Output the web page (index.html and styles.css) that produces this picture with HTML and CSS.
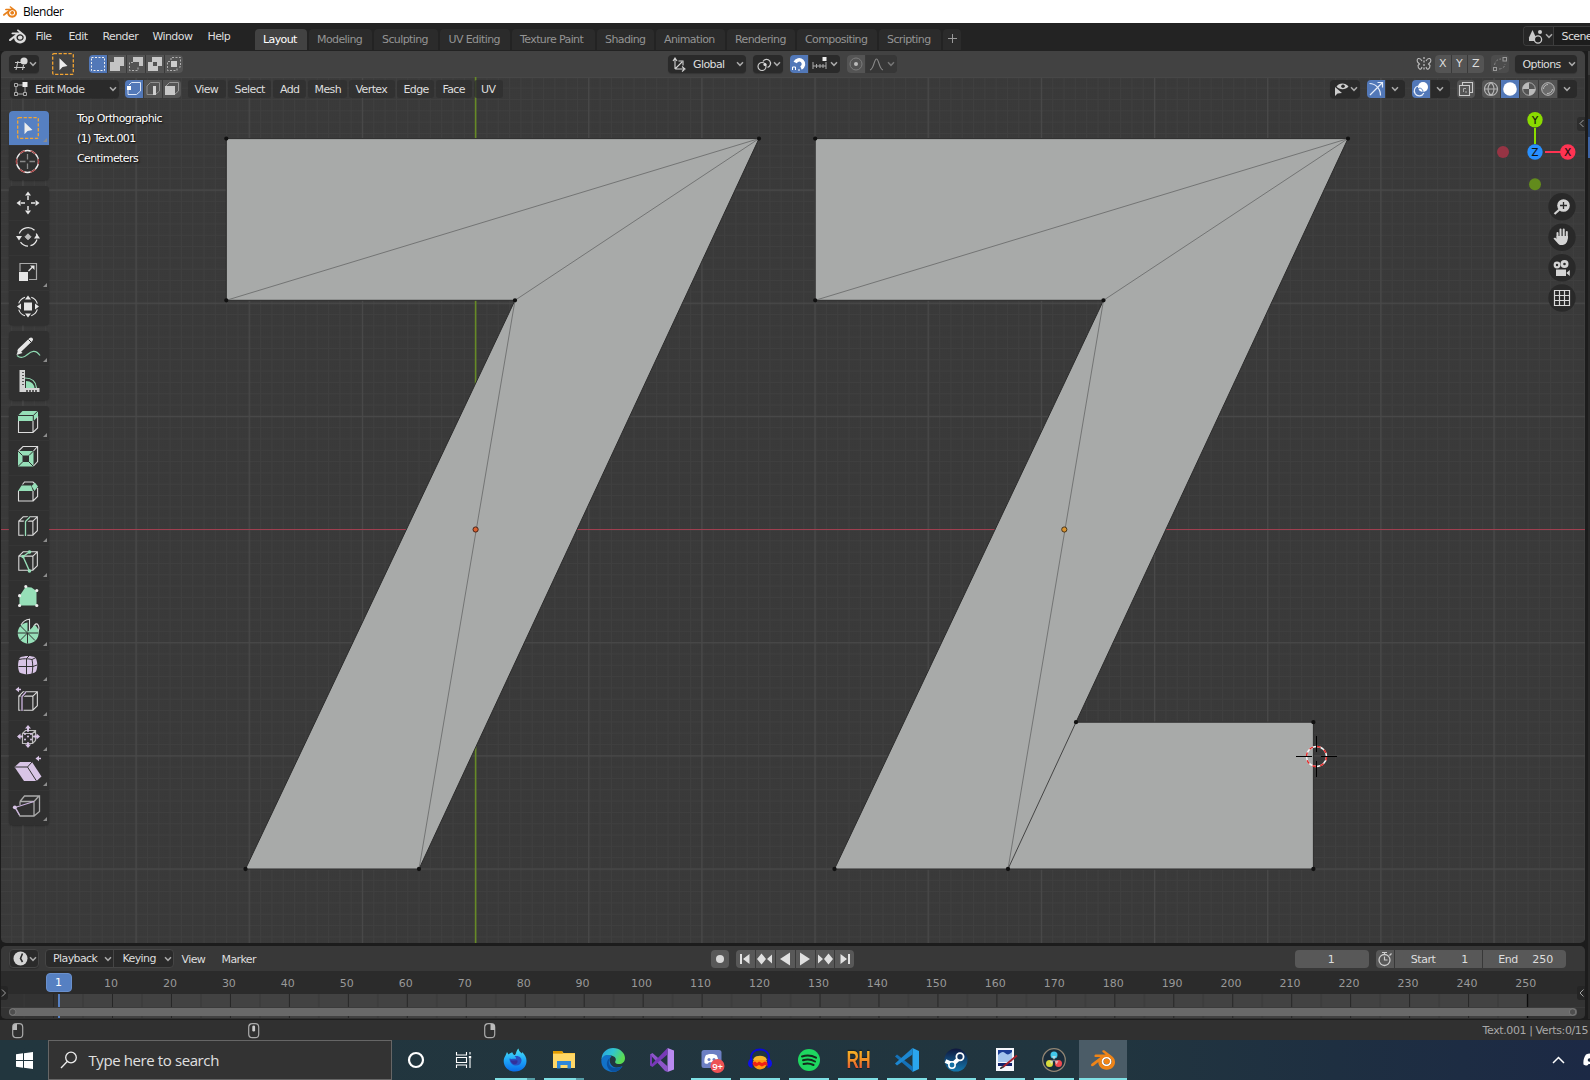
FILE: index.html
```html
<!DOCTYPE html>
<html lang="en">
<head>
<meta charset="utf-8">
<title>Blender</title>
<link rel="stylesheet" href="styles.css">
</head>
<body>
<svg class="defs" aria-hidden="true">
  <defs>
    <symbol id="blender" viewBox="0 0 24 24"><path d="M12.51 13.214c.046-.8.438-1.506 1.03-2.006a3.424 3.424 0 0 1 2.212-.79c.85 0 1.631.3 2.211.79.592.5.983 1.206 1.028 2.005.045.823-.285 1.586-.865 2.153a3.389 3.389 0 0 1-2.374.938 3.393 3.393 0 0 1-2.376-.938c-.58-.567-.91-1.33-.865-2.152M7.35 14.831c.006.314.106.922.256 1.398a7.372 7.372 0 0 0 1.593 2.757 8.227 8.227 0 0 0 2.787 2.001 8.947 8.947 0 0 0 3.66.76 8.964 8.964 0 0 0 3.657-.772 8.285 8.285 0 0 0 2.785-2.01 7.428 7.428 0 0 0 1.592-2.762 6.964 6.964 0 0 0 .25-3.074 7.123 7.123 0 0 0-1.016-2.779 7.764 7.764 0 0 0-1.852-2.043h.002L13.566 2.55l-.02-.015c-.492-.378-1.319-.376-1.86.002-.547.382-.609 1.015-.123 1.415l-.001.001 3.126 2.543-9.53.01h-.013c-.788.001-1.545.518-1.695 1.172-.154.665.38 1.217 1.2 1.22V8.9l4.83-.01-8.62 6.617-.034.025c-.813.622-1.075 1.658-.563 2.315.52.667 1.625.668 2.447.004L7.414 14s-.069.52-.063.831zm12.09 1.741c-.97.988-2.326 1.548-3.795 1.55-1.47.004-2.827-.552-3.797-1.538a4.51 4.51 0 0 1-1.036-1.622 4.282 4.282 0 0 1 .282-3.519 4.702 4.702 0 0 1 1.153-1.371c.942-.768 2.141-1.183 3.396-1.185 1.256-.002 2.455.41 3.398 1.175.48.391.87.854 1.152 1.367a4.28 4.28 0 0 1 .522 1.706 4.236 4.236 0 0 1-.239 1.811 4.54 4.54 0 0 1-1.035 1.626"/></symbol>
    <symbol id="chev" viewBox="0 0 8 6"><path d="M1 1.2 4 4.3 7 1.2" fill="none" stroke="#a8a8a8" stroke-width="1.5"/></symbol>
    <symbol id="cube" viewBox="0 0 40 35"><path d="M9.5 12.5h14.5v14.5H9.5zL14 8h14.6v14.3L24 27M24 12.5 28.6 8" fill="none" stroke="#dcdcdc" stroke-width="1.1"/></symbol>
    <symbol id="more" viewBox="0 0 5 5"><path d="M5 0v5H0z" fill="#8c8c8c"/></symbol>
    <symbol id="cursor-tool" viewBox="0 0 22 22"><rect x=".7" y=".7" width="20.6" height="20.6" rx="1" fill="none" stroke="#f3a432" stroke-width="1.3" stroke-dasharray="3.3 1.6"/><path d="M7.5 5.2v12l3-3.1 5-1z" fill="#ececec"/></symbol>
  </defs>
</svg>

<div class="titlebar"><svg class="title-logo"><use href="#blender"/></svg><span>Blender</span></div>

<header class="topbar">
  <svg class="app-logo"><use href="#blender"/></svg>
  <nav class="app-menu"><span>File</span><span>Edit</span><span>Render</span><span>Window</span><span>Help</span></nav>
  <nav class="tabs">
    <span class="active">Layout</span><span>Modeling</span><span>Sculpting</span><span>UV Editing</span><span>Texture Paint</span><span>Shading</span><span>Animation</span><span>Rendering</span><span>Compositing</span><span>Scripting</span><span class="plus"><svg width="9" height="9"><path d="M4.5 0v9M0 4.5h9" stroke="#999"/></svg></span>
  </nav>
  <div class="scene">
    <span class="scene-icon"><svg width="15" height="15"><path d="M4.5 1 8 8.5V12H1V8.500z" fill="#ccc"/><circle cx="12" cy="3" r="2" fill="#ccc"/><circle cx="10" cy="10.500" r="3.600" fill="#232323" stroke="#ccc" stroke-width="1.3"/></svg><svg class="chev"><use href="#chev"/></svg></span>
    <span class="scene-name">Scene</span>
  </div>
</header>

<main class="workspace">
  <section class="area editor">
    <div class="tool-header">
      <span class="drop editor-type"><svg width="15" height="15"><path d="M2 5.500h6M1 10.500h11M5 4 3 13M10.500 8l-1 5" stroke="#c8c8c8" stroke-width="1.1"/><circle cx="11" cy="4" r="3.600" fill="#d8d8d8"/></svg><svg class="chev"><use href="#chev"/></svg></span>
      <svg class="active-tool" width="22" height="22"><use href="#cursor-tool"/></svg>
      <div class="group select-modes">
        <span class="on"><svg><rect x="2.500" y="2.500" width="13" height="13" fill="none" stroke="#eee" stroke-dasharray="2 1.500"/></svg></span>
        <span><svg><path d="M6 2h10v9h-4v5H2V7h4z" fill="#c4c4c4"/></svg></span>
        <span><svg><path d="M6 2h10v9h-4V7H6z" fill="#c4c4c4"/><path d="M6 7.500H2.500v8H11V12" fill="none" stroke="#b0b0b0" stroke-dasharray="2 1.500"/></svg></span>
        <span><svg><path d="M6 2h10v9h-4v5H2V7h4zM7 7v4h4V7z" fill="#c8c8c8" fill-rule="evenodd"/></svg></span>
        <span><svg><rect x="6" y="6" width="6" height="6" fill="#ccc"/><path d="M6 5V2.500h9.500V12H13M5 6.500H2.500v9H12V13" fill="none" stroke="#b0b0b0" stroke-dasharray="2 1.500"/></svg></span>
      </div>
      <span class="drop orientation"><svg width="15" height="15"><path d="M3 12V2M1 4l2-3 2 3M3 12h9M10 9.500l3 2.500-3 2.500M3 12l7-7M6.500 4H11v4.500" fill="none" stroke="#d4d4d4" stroke-width="1.100"/></svg><b>Global</b><svg class="chev"><use href="#chev"/></svg></span>
      <span class="drop pivot"><svg width="15" height="15"><circle cx="5" cy="9.500" r="4" fill="none" stroke="#ccc" stroke-width="1.200"/><path d="M6 4.500a4 4 0 1 1 4.500 5.800" fill="none" stroke="#ccc" stroke-width="1.200"/><circle cx="8" cy="7.500" r="1.600" fill="#ddd"/></svg><svg class="chev"><use href="#chev"/></svg></span>
      <div class="group snap"><span class="on"><svg><path d="M5.200 7.500A4.300 4.300 0 1 1 11 13" fill="none" stroke="#fff" stroke-width="3.600"/><path d="M2.500 15v-3h3v3M8 15h2" fill="none" stroke="#fff"/></svg></span>
      <span class="snap-type"><svg class="snap-svg"><path d="M1 6v7M14 6v7M1 10h13M4.500 8v4M8 8v4M11 8v4" stroke="#aaa"/><rect x="10.500" y="1" width="4" height="4" fill="#eee"/></svg><svg class="chev"><use href="#chev"/></svg></span></div>
      <div class="group prop"><span><svg><circle cx="9" cy="9" r="6" fill="none" stroke="#7c7c7c"/><circle cx="9" cy="9" r="2" fill="#bdbdbd"/></svg></span><span class="prop-type"><svg class="snap-svg"><path d="M1 14C5 13 5 3 7.500 3S10 13 14 14" fill="none" stroke="#888" stroke-width="1.200"/></svg><svg class="chev dim"><use href="#chev"/></svg></span></div>
      <svg class="mirror" width="16" height="16"><path d="M8 1v14" stroke="#ddd" stroke-dasharray="2 1.500"/><path d="M6 5C4 1 0 2 1.500 6L3.500 8 2 9.500C2 13 5 15 6 11M10 5c2-4 6-3 4.500 1L12.500 8l1.500 1.500C14 13 11 15 10 11" fill="none" stroke="#bbb" stroke-width="1.100"/></svg>
      <div class="group axes"><span>X</span><span>Y</span><span>Z</span></div>
      <div class="group automerge"><span><svg><rect x="2.500" y="12.500" width="3" height="3" fill="none" stroke="#999"/><rect x="12" y="2.500" width="3.500" height="3.500" fill="none" stroke="#999"/><path d="M3.500 10C4 6 7 4 10 4M8 14c3 0 6-2 6-5" fill="none" stroke="#828282" stroke-dasharray="2.500 1.500"/></svg></span></div>
      <span class="drop options"><b>Options</b><svg class="chev"><use href="#chev"/></svg></span>
    </div>

    <div class="viewport">
      <svg class="scene3d" width="1584" height="866" viewBox="1 77 1584 866">
        <defs>
          <pattern id="fine" x="475.600" y="529.500" width="2.263" height="2.263" patternUnits="userSpaceOnUse"><path d="M0 0h2.263M0 0v2.263" stroke="#3c3c3c" stroke-width="1"/></pattern>
          <pattern id="minor" x="475.100" y="529" width="11.316" height="11.316" patternUnits="userSpaceOnUse"><path d="M0 .500h11.316M.500 0v11.316" stroke="#404040" stroke-width="1"/></pattern>
          <pattern id="major" x="475" y="529" width="113.160" height="113.160" patternUnits="userSpaceOnUse"><path d="M0 .600h113.160M.600 0v113.160" stroke="#494949" stroke-width="1.200"/></pattern>
        </defs>
        <rect x="1" y="77" width="1584" height="866" fill="#393939"/>
        <rect x="1" y="77" width="1584" height="866" fill="url(#fine)" opacity=".5"/>
        <rect x="1" y="77" width="1584" height="866" fill="url(#minor)" opacity=".9"/>
        <rect x="1" y="77" width="1584" height="866" fill="url(#major)"/>
        <path d="M1 77.500h1584" stroke="#474747"/>
        <path d="M1 529.500h1584" stroke="#a03f50" stroke-width="1.200"/>
        <path d="M475.600 77v866" stroke="#668a26" stroke-width="1.600"/>
        <g fill="#a8aaa9" stroke="#2c2c2c" stroke-width="1">
          <path d="M226.300 138.600H759L419 869H245.500L515 300.300H226.300z"/>
          <path d="M815.200 138.600H1348L1076 722.200H1313.400V869H834.500L1103.500 300.300H815.200z"/>
        </g>
        <g fill="none" stroke="#6d6e6e" stroke-width=".9"><path d="M226.300 300.300 759 138.600 515 300.300 419 869"/><path d="M815.200 300.300 1348 138.600 1103.500 300.300 1008 869"/></g>
        <path d="M1076 722.200 1008 869" stroke="#444" stroke-width="1"/>
        <path d="M226.300 138.600h0M759 138.600h0M226.300 300.300h0M515 300.300h0M245.500 869h0M419 869h0M815.200 138.600h0M1348 138.600h0M815.200 300.300h0M1103.500 300.300h0M834.500 869h0M1008 869h0M1076 722.200h0M1313.400 722.200h0M1313.400 869h0" stroke="#111" stroke-width="4.300" stroke-linecap="round"/>
        <circle cx="475.600" cy="529.500" r="2.600" fill="#d9602f" stroke="#4a2418"/><circle cx="1064.300" cy="529.500" r="2.600" fill="#d9932f" stroke="#4a3518"/>
        <circle cx="1316.500" cy="756.500" r="10" fill="none" stroke="#f4f4f4" stroke-width="1.500"/><circle cx="1316.500" cy="756.500" r="10" fill="none" stroke="#e22a2a" stroke-width="1.500" stroke-dasharray="3.927"/>
        <path d="M1296 756.500h16M1321 756.500h16M1316.500 736v16M1316.500 761v16" stroke="#000"/>
        <g stroke-width="2"><path d="M1535 128v16" stroke="#8bdc00"/><path d="M1545 152h16" stroke="#ff3352"/></g>
        <circle cx="1503" cy="152" r="6" fill="#963444"/><circle cx="1535" cy="184.300" r="6" fill="#628b1c"/>
        <circle cx="1535" cy="119.700" r="7.700" fill="#8bdc00"/><circle cx="1535" cy="152" r="7.700" fill="#2890ff"/><circle cx="1567.800" cy="152" r="7.700" fill="#ff3352"/>
        <g class="axis-label"><text x="1535" y="123.500">Y</text><text x="1535" y="156">Z</text><text x="1567.800" y="156">X</text></g>
        <path d="M1585 117h-5a3 3 0 0 0-3 3v8a3 3 0 0 0 3 3h5z" fill="#2d2d2d"/><path d="M1583.500 120l-3.500 3.500 3.500 3.500" fill="none" stroke="#a0a0a0"/>
        <g fill="#292929"><circle cx="1562" cy="206.700" r="13.700"/><circle cx="1562" cy="237.200" r="13.700"/><circle cx="1562" cy="267.700" r="13.700"/><circle cx="1562" cy="298" r="13.700"/></g>
        <circle cx="1563.500" cy="205.500" r="6.300" fill="#d4d4d4"/><path d="M1559.500 209.500l-5 4.500" stroke="#d4d4d4" stroke-width="2.200"/><path d="M1563.500 202v7M1560 205.500h7" stroke="#292929" stroke-width="1.300"/>
        <path d="M1557.500 239v-6M1560.500 237v-7.500M1563.700 237v-7.500M1566.800 238v-6" stroke="#d4d4d4" stroke-width="2" stroke-linecap="round"/><path d="M1556.500 236h11.400c0 5-1 8-5 9h-3c-2-1-4-4-6.400-6.500 1-1.500 2.500-.5 3.500.5z" fill="#d4d4d4"/>
        <g fill="#d4d4d4"><circle cx="1557" cy="265" r="3.400"/><circle cx="1564.500" cy="264" r="4"/><path d="M1556 269.500h10v6.500h-10zM1569.800 270v6l-3.500-3z"/></g><circle cx="1557" cy="265" r="1.200" fill="#292929"/><circle cx="1564.500" cy="264" r="1.300" fill="#292929"/>
        <path d="M1554.500 290.500h15v15h-15zM1559.500 290.500v15M1564.500 290.500v15M1554.500 295.500h15M1554.500 300.500h15" fill="none" stroke="#d8d8d8" stroke-width="1.200"/>
      </svg>

      <div class="overlay">
        <div class="view-header">
          <span class="drop mode"><svg width="15" height="15"><path d="M4 3h6M3 4v6M4 12h6M12 5v5" stroke="#aaa"/><path d="M1.500 1.500h3v3h-3zM1.500 10.500h3v3h-3zM10.500 10.500h3v3h-3z" fill="none" stroke="#aaa"/><path d="M9.500 0h5v5h-5z" fill="#eee"/></svg><b>Edit Mode</b><svg class="chev"><use href="#chev"/></svg></span>
          <div class="group elem-modes">
            <span class="on"><svg><path d="M3 6V14.500H11.500L15.500 11V2.500H6.500L4 5" fill="none" stroke="#dbe4f5"/><rect x="2" y="6" width="4" height="4" fill="#fff"/></svg></span>
            <span><svg><path d="M3 6V14.500H11.500L15.500 11V2.500H6.500L3 6" fill="none" stroke="#8f8f8f"/><path d="M9 6h3v9H9z" fill="#d0d0d0"/></svg></span>
            <span><svg><path d="M3 6V14.500H11.500L15.500 11V2.500H6.500L3 6" fill="none" stroke="#999"/><path d="M2 6h10v9H2z" fill="#c8c8c8"/></svg></span>
          </div>
          <nav class="view-menu"><span>View</span><span>Select</span><span>Add</span><span>Mesh</span><span>Vertex</span><span>Edge</span><span>Face</span><span>UV</span></nav>
          <span class="drop visibility"><svg width="15" height="15"><path d="M1 5v9l2.500-2.500L8 11z" fill="#ccc"/><path d="M2.500 4.500C5 .5 11.500.5 14.500 4.500 11.500 8 5.500 8 2.500 4.500z" fill="#ccc"/><circle cx="9" cy="4.300" r="1.800" fill="#2a2a2a"/></svg><svg class="chev"><use href="#chev"/></svg></span>
          <div class="group pair gizmo"><span class="on"><svg><path d="M2.500 3.500c6 0 11 5 11 12M3 15 15 3M10.500 2.500h5v5" fill="none" stroke="#e6edfa" stroke-width="1.200"/></svg></span><span class="dark"><svg class="chev"><use href="#chev"/></svg></span></div>
          <div class="group pair"><span class="on"><svg><circle cx="11" cy="7" r="5" fill="#fff"/><path d="M6.500 6A5 5 0 1 0 11.800 13" fill="none" stroke="#e6edfa" stroke-width="1.200"/><path d="M6 9c2-2 5 0 5 3" fill="none" stroke="#5680c2"/></svg></span><span class="dark"><svg class="chev"><use href="#chev"/></svg></span></div>
          <div class="group xray"><span><svg><path d="M2.500 5.500h10v10h-10zM5.500 5V2.500h10v10H13" fill="none" stroke="#ccc" stroke-width="1.100"/><path d="M6.500 12V8.500H9M10 12H8" fill="none" stroke="#aaa"/></svg></span></div>
          <div class="group shading">
            <span><svg><path d="M9 2.500a6.500 6.500 0 1 0 .01 0M2.500 9h13M9 2.500C5 6 5 12 9 15.500M9 2.500C13 6 13 12 9 15.500" fill="none" stroke="#b4b4b4" stroke-width="1.100"/></svg></span>
            <span class="on"><svg><circle cx="9" cy="9" r="6.800" fill="#fff"/></svg></span>
            <span><svg><circle cx="9" cy="9" r="6.300" fill="none" stroke="#aaa"/><path d="M9 2.500V9h6.500A6.500 6.500 0 0 1 9 15.500V9H2.500A6.500 6.500 0 0 1 9 2.500z" fill="#bbb"/></svg></span>
            <span><svg><circle cx="9" cy="9" r="6.300" fill="#6a6a6a" stroke="#bbb"/><path d="M4.500 9A4.500 4.500 0 0 1 9 4.500M8 13.500A5 5 0 0 0 13.500 9" fill="none" stroke="#bbb"/></svg></span>
            <span class="dark"><svg class="chev"><use href="#chev"/></svg></span>
          </div>
        </div>

        <div class="view-body">
          <div class="toolbar">
            <div class="tools">
              <span class="tool on"><svg><use href="#cursor-tool" x="8" y="6" width="22" height="22"/><use href="#more" x="34" y="27" width="4" height="4"/></svg></span>
              <span class="tool"><svg><circle cx="18.500" cy="17.500" r="11" fill="none" stroke="#eee" stroke-width="1.300"/><circle cx="18.500" cy="17.500" r="11" fill="none" stroke="#a84848" stroke-width="1.400" stroke-dasharray="5.760" stroke-dashoffset="3"/><path d="M11 17.500h5.500M20.500 17.500H26M18.500 10v5.500M18.500 19.500V25" stroke="#888" stroke-width="1.300"/></svg></span>
            </div>
            <div class="tools">
              <span class="tool"><svg><path d="M19 5.500l3 4h-6zM19 28.500l3-4h-6zM7.500 17l4-3v6zM30.500 17l-4-3v6z" fill="#e6e6e6"/><path d="M19 10v4M19 20v4M12 17h4M22 17h4" stroke="#e6e6e6" stroke-width="1.500"/></svg></span>
              <span class="tool"><svg><path d="M10.300 14.500A9.500 9.500 0 0 1 25.500 11.300M11.500 23.200A9.500 9.500 0 0 0 19 27.200M21.500 26.700A9.500 9.500 0 0 0 28 20.500M28 16.500a9.500 9.500 0 0 0-.800-2" fill="none" stroke="#e6e6e6" stroke-width="1.200"/><path d="M7 17h6l-3 4.500zM25 19.500h6l-3-4.500z" fill="#e6e6e6"/><path d="M19 14.800l3 3-3 3-3-3z" fill="#bbb" stroke="#bbb" stroke-linejoin="round"/></svg></span>
              <span class="tool"><svg><path d="M11 17.500V9.500h16.500v16H20" fill="none" stroke="#aaa" stroke-width="1.200"/><path d="M10 18h9v9h-9z" fill="#e6e6e6"/><path d="M19.500 17l4-4" stroke="#e6e6e6" stroke-width="1.200"/><path d="M25.500 11.500v4.500L21 11.500z" fill="#e6e6e6"/><use href="#more" x="34" y="29" width="4" height="4"/></svg></span>
              <span class="tool"><svg><circle cx="19" cy="17.500" r="9.800" fill="none" stroke="#e6e6e6" stroke-width="1.100" stroke-dasharray="9 6.400" stroke-dashoffset="-3"/><path d="M15 13.500h8v8h-8z" fill="#e6e6e6"/><path d="M19 6.500l3 4h-6zM19 28.500l3-4h-6zM8 17.500l4-3v6zM30 17.500l-4-3v6z" fill="#e6e6e6"/></svg></span>
            </div>
            <div class="tools">
              <span class="tool"><svg><path d="M10.500 19.500 22 8.500" stroke="#e6e6e6" stroke-width="4" stroke-linecap="round"/><path d="M7.500 24l2-6 4 4z" fill="#e6e6e6"/><path d="M19.500 8.500l2.500 2.500" stroke="#2f2f2f"/><path d="M8 24.500c4 3.500 7 2 10.500-1s8-5.500 12.500 1" fill="none" stroke="#8ed8b0" stroke-width="1.300"/><use href="#more" x="34" y="27" width="4" height="4"/></svg></span>
              <span class="tool"><svg><path d="M10.500 6h5.500v18h14.500v4H10.500z" fill="#d4d4d4"/><path d="M14 8v1M14 11v1M14 14v1M14 17v1M14 20v1M18 26v2M21 26v2M24 26v2M27 26v2" stroke="#303030" stroke-width="1.500"/><path d="M17 24v-7c5 0 8 3 8.500 7z" fill="#96dfb8"/><path d="M16 14c7 0 11 4 11.500 10" fill="none" stroke="#96dfb8" stroke-width="1.200"/></svg></span>
            </div>
            <div class="tools">
              <span class="tool"><svg><path d="M9.500 15v11.500H24L28.600 22V10M24 15v11.500" fill="none" stroke="#dcdcdc" stroke-width="1.100"/><path d="M9 9.500 13.500 5h15.500v5.500L24.500 15H9z" fill="#96dfb8"/><path d="M9 9.500h15.300L28.800 5M24.300 9.500V15" fill="none" stroke="#303030"/><use href="#more" x="34" y="27" width="4" height="4"/></svg></span>
              <span class="tool"><svg><path d="M9 12h15.500v15.500H9z" fill="#96dfb8"/><path d="M9 12l4.500 4.500M24.500 12 20 16.500M9 27.500l4.500-4.500M24.500 27.500 20 23" stroke="#303030"/><path d="M13.500 16.500h6.500V23h-6.500z" fill="#303030"/><path d="M9.500 12 14 7.500h14.600v15L24.500 27M24.500 12l4-4.500" fill="none" stroke="#dcdcdc" stroke-width="1.100"/></svg></span>
              <span class="tool"><svg><path d="M9.500 17v10H24V17M24 27l4.600-4.500V14M13.500 10.500 15.500 8H24l2 2" fill="none" stroke="#dcdcdc" stroke-width="1.100"/><path d="M9 17l3.500-5.500h9.500L24 17z" fill="#96dfb8"/><path d="M22.500 12 26 8.800l3 3.700L25.500 17z" fill="#96dfb8"/></svg></span>
              <span class="tool"><svg><use href="#cube"/><path d="M16.500 27V12.500L21 8" fill="none" stroke="#303030" stroke-width="3.500"/><path d="M16.500 27V12.500L21 8" fill="none" stroke="#96dfb8" stroke-width="1.300"/><use href="#more" x="34" y="29" width="4" height="4"/></svg></span>
              <span class="tool"><svg><use href="#cube"/><path d="M20.500 8 14 12.500 20.500 27" fill="none" stroke="#96dfb8" stroke-width="1.400"/><path d="M20.500 8h0M14 12.500h0M20.500 27h0" stroke="#96dfb8" stroke-width="3.600" stroke-linecap="round"/><use href="#more" x="34" y="29" width="4" height="4"/></svg></span>
              <span class="tool"><svg><path d="M10.500 17 16.500 8l6 .500 5 3.500V26.500h-17z" fill="#96dfb8"/><path d="M16.800 7.500h0M27.800 11.500h0M10.600 16.700h0M10.600 26.500h0M27.800 26.500h0" stroke="#eee" stroke-width="3.200" stroke-linecap="round"/></svg></span>
              <span class="tool"><svg><path d="M12 11C14 7.500 17 5.500 20.500 5.200V17M24 14c2-5 5-6 6 0-.5 5-2 6-3 7" fill="none" stroke="#ddd" stroke-width="1.100"/><path d="M18.500 18V8.500A10.500 10.500 0 1 0 26 11z" fill="#96dfb8"/><path d="M18.500 19 10.500 11M18.500 19H8M18.500 19l-7.500 7.500M18.500 19v10.500M18.500 19l7.500 7.500M18.500 19H29" stroke="#303030"/><use href="#more" x="34" y="28" width="4" height="4"/></svg></span>
              <span class="tool"><svg><path d="M11 8.500c4-2 12-2 15.500 0 2 4 2.500 9 .5 14-4 3.500-12 3.500-16.500 1C8.500 19 8.500 13 11 8.500z" fill="#d8c4e6"/><path d="M10 10.500c4-1 9-1 13 0l4-2M9.500 17.500H24l4-1.500M17.500 9.500v16M23 10.500c1 5 1 9 0 14.500M17.500 9.500 20 7" fill="none" stroke="#303030"/><use href="#more" x="34" y="28" width="4" height="4"/></svg></span>
              <span class="tool"><svg><use href="#cube"/><path d="M13 27V12.500L17 8" fill="none" stroke="#303030" stroke-width="3"/><path d="M13 27V12.500L17 8" fill="none" stroke="#cdb4e0" stroke-width="1.300"/><path d="M6.500 5.500 10 2.800V8.200z" fill="#d8c4e6"/><path d="M9 5.500h3" stroke="#d8c4e6" stroke-width="1.500"/><use href="#more" x="34" y="28" width="4" height="4"/></svg></span>
              <span class="tool"><svg><path d="M13.500 14.500h10v10h-10zL16.500 11.500h10v10l-3 3M23.500 14.500l3-3" fill="none" stroke="#bbb" stroke-width="1.200"/><path d="M19 6l3 3.500h-6zM19 29l3-3.500h-6zM8 17.500l3.500-3v6zM31 17.500l-3.500-3v6z" fill="#d8c4e6"/><path d="M16 15h0M22 15h0M16 20.500h0M22 20.500h0M10 17.500h3M25 17.500h3M19 9v3M19 24v3M19 17.500h0" stroke="#d8c4e6" stroke-width="2" stroke-linecap="round"/><use href="#more" x="34" y="28" width="4" height="4"/></svg></span>
              <span class="tool"><svg><path d="M5.500 13 11 8h12l9.500 14.500-5 4.500H15z" fill="#d8c4e6"/><path d="M6 13h12.500L23 8M18.500 13l9 14" fill="none" stroke="#303030"/><path d="M26.500 4.500 30 1.800v5.400z" fill="#d8c4e6"/><path d="M29 4.500h3" stroke="#d8c4e6" stroke-width="1.500"/><use href="#more" x="34" y="28" width="4" height="4"/></svg></span>
              <span class="tool"><svg><path d="M11 12.500 15.500 7h15v15.500L25 27H11L7 19.500M11 12.500h14L30 7M25 12.500V27M11 12.500V16" fill="none" stroke="#aaa" stroke-width="1.300"/><path d="M10.500 26 6 18.500 25 12.500" fill="none" stroke="#cdb4e0" stroke-width="1.200"/><circle cx="5.800" cy="18.300" r="1.900" fill="#d8c4e6"/><use href="#more" x="34" y="28" width="4" height="4"/></svg></span>
            </div>
          </div>
          <div class="view-info"><p>Top Orthographic</p><p>(1) Text.001</p><p>Centimeters</p></div>
        </div>
      </div>
    </div>
  </section>

  <section class="area timeline">
    <div class="tl-header">
      <span class="drop clock"><svg width="15" height="15"><circle cx="7.500" cy="7.500" r="7" fill="#d4d4d4"/><path d="M9.500 2.500 7.500 7.500l2 3.500" fill="none" stroke="#2a2a2a" stroke-width="1.600"/></svg><svg class="chev"><use href="#chev"/></svg></span>
      <div class="tl-drops"><span><b>Playback</b><svg class="chev"><use href="#chev"/></svg></span><span><b>Keying</b><svg class="chev"><use href="#chev"/></svg></span></div>
      <span class="tl-view">View</span><span class="tl-marker">Marker</span>
      <div class="group rec"><span><svg><circle cx="9" cy="9" r="4" fill="#d8d8d8"/></svg></span></div>
      <div class="group transport">
        <span><svg><path d="M4 4h2v10H4zM13.500 4v10L7 9z" fill="#e0e0e0"/></svg></span>
        <span><svg><path d="M5.500 3.500 10 9l-4.500 5.500L1 9zM16 4.500v9L11 9z" fill="#e0e0e0"/></svg></span>
        <span><svg><path d="M14 2.500v13L4 9z" fill="#e0e0e0"/></svg></span>
        <span><svg><path d="M4 2.500v13L14 9z" fill="#e0e0e0"/></svg></span>
        <span><svg><path d="M12.500 3.500 17 9l-4.500 5.500L8 9zM2 4.500v9L7 9z" fill="#e0e0e0"/></svg></span>
        <span><svg><path d="M12 4h2v10h-2zM4.500 4v10L11 9z" fill="#e0e0e0"/></svg></span>
      </div>
      <span class="field current">1</span>
      <div class="range"><span class="stopwatch"><svg width="18" height="18"><circle cx="8.500" cy="10" r="5.500" fill="none" stroke="#ccc" stroke-width="1.300"/><path d="M6 2.500h5M8.500 2.500v2M13.500 5.500l2-2M8.500 6.500V10h3" fill="none" stroke="#ccc" stroke-width="1.200"/></svg></span><span class="start"><b>Start</b><i>1</i></span><span class="end"><b>End</b><i>250</i></span></div>
    </div>
    <div class="ruler">
      <span class="frame">1</span>
      <div class="numbers"><span>10</span><span>20</span><span>30</span><span>40</span><span>50</span><span>60</span><span>70</span><span>80</span><span>90</span><span>100</span><span>110</span><span>120</span><span>130</span><span>140</span><span>150</span><span>160</span><span>170</span><span>180</span><span>190</span><span>200</span><span>210</span><span>220</span><span>230</span><span>240</span><span>250</span></div>
    </div>
    <div class="tracks">
      <svg width="1584" height="24" viewBox="1 994 1584 24">
        <defs><pattern id="ticks" x="112" y="994" width="58.960" height="24" patternUnits="userSpaceOnUse"><path d="M.500 0v24" stroke="#262626"/><path d="M30 0v24" stroke="#383838"/></pattern></defs>
        <rect x="1" y="994" width="1584" height="24" fill="#333"/><rect x="59" y="994" width="1468.500" height="24" fill="#424242"/>
        <rect x="20" y="994" width="1520" height="24" fill="url(#ticks)"/><path d="M1527.500 994v24" stroke="#0c0c0c" stroke-width="1.300"/>
        <path d="M59 992v26" stroke="#5680c2" stroke-width="2"/>
        <rect x="1" y="1007" width="1584" height="1" fill="#3b3b3b"/><rect x="9" y="1008" width="1568" height="8" rx="4" fill="#696969"/>
        <circle cx="12.700" cy="1012" r="3.200" fill="#4e4e4e" stroke="#858585" stroke-width=".7"/><circle cx="1572.600" cy="1012" r="3.200" fill="#4e4e4e" stroke="#858585" stroke-width=".7"/>
      </svg>
    </div>
    <svg class="side left" width="7" height="14"><path d="M0 0h4a3 3 0 0 1 3 3v8a3 3 0 0 1-3 3H0z" fill="#252525"/><path d="M1 3.500 4.500 7 1 10.500" fill="none" stroke="#a0a0a0"/></svg>
    <svg class="side right" width="8" height="14"><path d="M8 0H3a3 3 0 0 0-3 3v8a3 3 0 0 0 3 3h5z" fill="#252525"/><path d="M6.500 3.500 3 7l3.500 3.500" fill="none" stroke="#a0a0a0"/></svg>
  </section>
  <div class="next-area"></div>
</main>

<footer class="status">
  <svg width="12" height="16"><rect x=".700" y=".700" width="10" height="14" rx="3.500" fill="none" stroke="#aaa" stroke-width="1.200"/><path d="M1 7V3.500C1 2 2 1 3.500 1H5v6z" fill="#bbb"/></svg>
  <svg width="12" height="16"><rect x=".700" y=".700" width="10" height="14" rx="3.500" fill="none" stroke="#aaa" stroke-width="1.200"/><rect x="4.300" y="2.500" width="2.800" height="6" rx="1.300" fill="#ccc"/></svg>
  <svg width="12" height="16"><rect x=".700" y=".700" width="10" height="14" rx="3.500" fill="none" stroke="#aaa" stroke-width="1.200"/><path d="M11 7V3.500C11 2 10 1 8.500 1H6.500v6z" fill="#bbb"/></svg>
  <span>Text.001 | Verts:0/15</span>
</footer>

<footer class="taskbar">
  <span class="start-btn"><svg width="17" height="17"><path d="M0 2.300 7 1.300V8H0zM8 1.200 17 0v8H8zM0 9h7v6.700l-7-1zM8 9h9v8l-9-1.200z" fill="#fff"/></svg></span>
  <div class="search"><svg width="18" height="18"><circle cx="11" cy="6.500" r="5.300" fill="none" stroke="#eee" stroke-width="1.300"/><path d="M7.200 10.500 1 17" stroke="#eee" stroke-width="1.300"/></svg><span>Type here to search</span></div>
  <span class="app"><svg><circle cx="12" cy="12" r="7" fill="none" stroke="#fff" stroke-width="2.200"/></svg></span>
  <span class="app"><svg><path d="M4.500 4v3h10V4M4.500 20v-3h10v3M4.500 9.500h10v5h-10zM18 4v2.500M18 11v9" fill="none" stroke="#fff" stroke-width="1.100"/><path d="M16.800 8h2.400v2.500h-2.400z" fill="#fff"/></svg></span>
  <span class="app run multi"><svg><defs><linearGradient id="ff" x1="0" y1="0" x2="0" y2="1"><stop offset="0" stop-color="#4ee4f5"/><stop offset=".5" stop-color="#1fa8f8"/><stop offset="1" stop-color="#0a6cea"/></linearGradient></defs><path d="M2.500 7.500 4 4l1.500 2.500C7 5 8.500 4.500 9.500 4.500 10 6.500 11 7 12 7c1.500-1.500 1-4.500 3.500-6.500.3 2.500 2 3.500 3.300 5L19 4c3 2.500 4.500 5.500 4.500 9 0 6-5 10.500-11.500 10.500S.700 19 .700 13c0-2 .8-4 1.800-5.500z" fill="url(#ff)"/><path d="M6.500 10.500c2 1 4 0 6 .5 1-1.200 0-2.500-1-2.800 4-1.200 7.500 1.300 7 4.800-.5 3.500-3.500 5-6.500 4.500s-5.500-3-5.500-7z" fill="#2a4fc0"/><path d="M7.500 12c3 1.500 4-.5 7 .5.500 2-1 3.800-3 3.800S8 14.500 7.500 12z" fill="#33309a"/></svg></span>
  <span class="app run multi"><svg><path d="M1 3h9l1.500 2H23v15H1z" fill="#fcc744"/><path d="M1 3h9l1 2.500H1z" fill="#e09a00"/><path d="M1 6h22v14H1z" fill="#ffd766"/><path d="M5 13h14v7.500h-3.500V17h-7v3.500H5z" fill="#2f87d8"/></svg></span>
  <span class="app"><svg><defs><linearGradient id="ed" x1="0" y1="0" x2="1" y2=".4"><stop offset="0" stop-color="#2a9fe0"/><stop offset=".5" stop-color="#30c4d0"/><stop offset="1" stop-color="#5bdc52"/></linearGradient></defs><path d="M.5 11C1 4 6 0 12 0c7 0 12 5 12 10 0 4-3 6-6 6-3.500 0-4.500-1.500-3.500-3 2-4-4.500-7-9-4.500C3 10 1 12 .5 11z" fill="url(#ed)"/><path d="M.3 12.500C1 7 7 5.500 10.500 8.500 7 10.500 8.500 19 15 19.500c3 .2 5-.8 6.500-1.500C19 22 16 24 12 24 5 24 0 19 .3 12.500z" fill="#1272c8"/><path d="M9 10c-3 5 0 10 5.500 10 3 0 5-.8 7-2-2 4-5.500 6-10 5.800C5 21 4 13 9 10z" fill="#0c519e"/></svg></span>
  <span class="app"><svg><path d="M17.500 0 24 2.500v19L17.500 24z" fill="#b889f0"/><path d="M0 6.500 2.500 5l15.200 13.500V24L15 23z" fill="#8d55c9"/><path d="M0 17.500V6.500l2 1.500v8l15.500-16v6.500L2.500 19z" fill="#7839b8"/></svg></span>
  <span class="app run"><svg><rect x="2.500" y="2" width="20" height="18" rx="2.500" fill="#6d80c4"/><path d="M7 7c3-1.500 8-1.500 10.500 0 1.500 2.500 2 5 1.500 8-3 2-3 0-4-.8h-5c-1 .8-1 2.800-4.500.8-.3-3 0-6 1.500-8z" fill="#fff"/><circle cx="10" cy="11.500" r="1.500" fill="#6d80c4"/><circle cx="15" cy="11.500" r="1.500" fill="#6d80c4"/><circle cx="18.500" cy="18" r="7" fill="#ee5254"/><text class="badge" x="18.500" y="21.500">9+</text></svg></span>
  <span class="app run"><svg><ellipse cx="12" cy="15" rx="7" ry="6.500" fill="#ff9a12"/><path d="M6 10c2-3 10-3 12 0l1 2H5z" fill="#f5b62c"/><path d="M4 15l3-1.500 2 1.500 2-1.500 3 1.500 3-1.500 3 1.500v3l-3-1-3 1.500-3-1.500-3 1.500-3-1.500z" fill="#f02015"/><path d="M3 13V10C3 4.500 7 1.500 12 1.500S21 4.500 21 10v3" fill="none" stroke="#0a0ad8" stroke-width="2"/><path d="M4.500 10v10C1.500 19.500 0 18 0 15.500s1.500-5 4.500-5.500zM19.500 10v10c3-.5 4.500-2 4.500-4.500s-1.500-5-4.500-5.500z" fill="#0f10e8"/></svg></span>
  <span class="app run"><svg><circle cx="12" cy="12" r="11" fill="#1ed760"/><path d="M5 8.500c5-1.600 10-1 14 1.200M6 12.300c4-1.200 8.500-.8 12 1.200M6.500 16c3.500-1 7-.6 10 1" fill="none" stroke="#142a1c" stroke-width="2" stroke-linecap="round"/></svg></span>
  <span class="app run"><span class="rh">RH</span></span>
  <span class="app run"><svg><path d="M17.500 0 24 3v18l-6.500 3z" fill="#2aa5ee"/><path d="M0 8.500 2 6.500 18 19v5z" fill="#1572b8"/><path d="M0 15.500 17.500 0v6.500L2 17.500z" fill="#1c87d0"/></svg></span>
  <span class="app run"><svg><defs><linearGradient id="st" x1="0" y1="0" x2="0" y2="1"><stop offset="0" stop-color="#10163c"/><stop offset="1" stop-color="#1478ae"/></linearGradient></defs><circle cx="12" cy="12" r="11.500" fill="url(#st)"/><path d="M1.500 13 8 16M8.500 16.500l7-6.500" stroke="#fff" stroke-width="4"/><circle cx="8" cy="17" r="3.200" fill="#1470a4" stroke="#fff" stroke-width="1.500"/><circle cx="16" cy="8.800" r="3.600" fill="#143560" stroke="#fff" stroke-width="1.800"/></svg></span>
  <span class="app run"><svg><path d="M3 0h18v23H3z" fill="#f4f6fb"/><path d="M5 2h14v12H5z" fill="#1b3d95"/><path d="M5 7c3-3 5-4 7-2s4 2 7-1v10H5z" fill="#a3c4ec"/><path d="M5 15h14v3H5z" fill="#13246c"/><path d="M10 19 24 7.500" stroke="#a5202b" stroke-width="1.800"/><path d="M7 21c0-2 2-3 3.500-2.500S9 21 7 21z" fill="#333"/></svg></span>
  <span class="app run"><svg><circle cx="12" cy="12" r="11.300" fill="#1a2c3a" stroke="#938674" stroke-width="1.200"/><circle cx="12" cy="7" r="3.500" fill="#41c6ea"/><circle cx="7.500" cy="15.500" r="3.500" fill="#d8dc3c"/><circle cx="16.500" cy="15.500" r="3.500" fill="#ee4a50"/><path d="M12 12 10 8h4zM12 12l-4.500 1 2 3.500zM12 12l4.500 1-2 3.500z" fill="#ddd" opacity=".7"/></svg></span>
  <span class="app run current-app"><svg><circle cx="15.500" cy="13.500" r="5" fill="#fff"/><circle cx="15.500" cy="13.500" r="3" fill="#235a9c"/><use href="#blender" class="orange-ring"/></svg></span>
  <div class="tray"><svg width="13" height="8"><path d="M1 7 6.500 1.500 12 7" fill="none" stroke="#fff" stroke-width="1.500"/></svg><svg class="tray-discord" width="18" height="14"><path d="M3 1.500c4-1.500 8-1.500 12 0 2 3 3 6 2.500 10-3 2-4 1-5-.5h-7c-1 1.500-2 2.500-5 .5C0 7.500 1 4.500 3 1.500z" fill="#fff"/><circle cx="6.500" cy="7" r="1.800" fill="#1d2a40"/><circle cx="11.500" cy="7" r="1.800" fill="#1d2a40"/></svg></div>
</footer>
</body>
</html>
```
FILE: styles.css
```css
* { box-sizing: border-box; }
body {
  margin: 0; width: 1590px; height: 1080px; overflow: hidden;
  display: flex; flex-direction: column;
  background: #1c1c1c; color: #dedede;
  font: 11px/18px "DejaVu Sans", sans-serif; letter-spacing: -.6px; white-space: nowrap;
}
b, i { font-weight: normal; font-style: normal; }
p { margin: 0; }
svg { display: block; flex: none; }
.defs { position: absolute; width: 0; height: 0; }
.chev { width: 8px; height: 6px; }
.dim { opacity: .55; }

.titlebar { height: 23px; background: #fff; color: #000; display: flex; align-items: center; padding-left: 3px; gap: 6px; font: 12px "Open Sans", sans-serif; letter-spacing: -.5px; }
.title-logo { width: 14px; height: 14px; fill: #e8801a; }

.topbar { height: 28px; background: #232323; display: flex; align-items: flex-start; }
.app-logo { width: 17px; height: 17px; fill: #dcdcdc; margin: 5px 0 0 9px; }
.app-menu { display: flex; margin: 5px 0 0 9.500px; width: 219px; }
.app-menu span { width: 33px; }
.app-menu span:nth-child(3) { width: 50px; }
.app-menu span:nth-child(2) { width: 34px; }
.app-menu span:nth-child(4) { width: 55px; }
.tabs { display: flex; gap: 2px; margin-top: 6px; height: 21px; }
.tabs span { width: 63px; background: #2b2b2b; color: #949494; border-radius: 4px 4px 0 0; padding: 2px 0 0 8.500px; }
.tabs .active { width: 52px; background: #424242; color: #fff; }
.tabs span:nth-child(3) { width: 64.500px; }
.tabs span:nth-child(4) { width: 69.500px; }
.tabs span:nth-child(5) { width: 83px; }
.tabs span:nth-child(6) { width: 57px; }
.tabs span:nth-child(7) { width: 69px; }
.tabs span:nth-child(8) { width: 68px; }
.tabs span:nth-child(9) { width: 80px; }
.tabs span:nth-child(10) { width: 62px; }
.tabs .plus { width: 18px; padding: 5px 0 0 5px; }
.scene { margin: 3px 0 0 auto; width: 67px; height: 20px; display: flex; border: 1px solid #3d3d3d; border-right: 0; border-radius: 4px 0 0 4px; overflow: hidden; }
.scene-icon { width: 31px; display: flex; align-items: center; gap: 2px; padding-left: 4px; border-right: 1px solid #3d3d3d; background: #262626; }
.scene-name { background: #1d1d1d; padding: 1px 0 0 7.500px; flex: 1; }

.workspace { height: 969px; display: grid; grid-template: 892px 73px / 1584px 2px; column-gap: 3px; row-gap: 3px; padding-left: 1px; background: #1c1c1c; }
.area { border-radius: 5px; overflow: hidden; min-width: 0; }
.next-area { grid-column: 2; grid-row: 1 / 3; background: linear-gradient(#3a3a3a 24px, #282828 24px 68px, #23406e 68px 86px, #3d64a6 86px 107px, #282828 107px); }
.editor { display: flex; flex-direction: column; }
.tool-header { height: 26px; background: #424242; display: flex; align-items: flex-start; padding-top: 4px; }
.drop { display: flex; align-items: center; height: 18px; background: #2a2a2a; border-radius: 4px; box-shadow: 0 1px 1px #0003; }
.drop .chev { margin-left: auto; }
.drop b { padding-top: 1px; }
.editor-type, .clock, .pivot, .visibility { width: 30px; padding: 0 2px 0 4px; }
.editor-type { margin-left: 8px; }
.active-tool { margin: -2px 0 0 13px; }
.group { display: flex; gap: 1px; height: 18px; border-radius: 4px; overflow: hidden; background: #3a3a3a; }
.group span { width: 18px; background: #545454; display: flex; align-items: center; justify-content: center; }
.group span svg:not(.chev) { width: 18px; height: 18px; }
.group .on { background: #5278b8; }
.select-modes { margin-left: 15px; }
.orientation { width: 78px; margin-left: 485px; padding: 0 2px 0 3.500px; }
.orientation b { margin-left: 6.500px; }
.pivot { margin-left: 7px; }
.snap, .prop { margin-left: 7px; }
.group .snap-type, .group .prop-type { width: 31px; background: #2a2a2a; gap: 3px; }
.group .prop-type { background: #373737; }
.group span .snap-svg:not(.chev) { width: 15px; height: 16px; }
.mirror { margin: 1px 0 0 519px; }
.axes { margin-left: 3px; }
.axes span { width: 15.500px; letter-spacing: 0; }
.automerge { margin-left: 7px; }
.automerge span { background: #4c4c4c; }
.options { width: 62px; margin-left: 6px; padding: 0 1px 0 8px; }

.viewport { position: relative; flex: 1; }
.scene3d { position: absolute; left: 0; top: 0; }
.axis-label { font-size: 10px; fill: #101010; text-anchor: middle; stroke: #101010; stroke-width: .2px; letter-spacing: 0; }
.overlay { position: absolute; inset: 0; }
.view-header { display: flex; padding-top: 3px; height: 34px; }
.mode { width: 109px; margin-left: 9px; padding: 0 2px 0 3px; }
.mode b { margin-left: 7px; }
.elem-modes { margin-left: 6px; }
.view-menu { display: flex; gap: 2px; margin-left: 7px; width: 1142px; }
.view-menu span { height: 18px; width: 38px; padding: 1px 0 0 6.500px; background: #303030cc; border-radius: 3px; }
.view-menu span:nth-child(2) { width: 43px; }
.view-menu span:nth-child(3) { width: 33px; padding-left: 7px; }
.view-menu span:nth-child(4) { width: 39px; }
.view-menu span:nth-child(5) { width: 46px; }
.view-menu span:nth-child(6) { width: 37px; }
.view-menu span:nth-child(7) { width: 36px; }
.view-menu span:nth-child(8) { width: 29px; padding-left: 7px; }
.pair, .xray, .shading { margin-left: 7px; }
.group .dark { background: #2a2a2a; width: 19px; padding-right: 2px; }
.view-body { display: flex; }
.toolbar { display: flex; flex-direction: column; gap: 6.500px; margin-left: 8px; width: 40px; }
.tools { display: flex; flex-direction: column; gap: 1px; background: #353535; border-radius: 4px; overflow: hidden; box-shadow: 0 1px 2px #0004; }
.tool { height: 34px; background: #303030; }
.tool:first-child { height: 33.500px; }
.tool.on { background: #5680c2; }
.tool svg { width: 40px; height: 34px; overflow: visible; }
.tool:not(:first-child) svg { margin-top: -1.500px; }
.view-info { margin: -2px 0 0 28px; line-height: 20px; color: #fff; text-shadow: 1px 1px 2px #000; }

.timeline { position: relative; background: #303030; display: flex; flex-direction: column; }
.tl-header { height: 25px; background: #383838; display: flex; padding-top: 3px; }
.clock { margin-left: 8px; height: 19px; border: 1px solid #454545; padding: 0 1px 0 3px; }
.tl-drops { display: flex; height: 19px; width: 129px; margin-left: 6px; border: 1px solid #454545; border-radius: 4px; background: #2a2a2a; }
.tl-drops span { display: flex; align-items: center; width: 69px; padding: 0 1px 0 7px; border-right: 1px solid #454545; }
.tl-drops b { padding-top: 1px; }
.tl-drops span:last-child { width: 59px; border: 0; padding-left: 8px; }
.tl-drops .chev { margin-left: auto; }
.tl-view { width: 40px; margin-left: 7.500px; line-height: 21px; }
.tl-marker { width: 489.500px; line-height: 21px; }
.timeline .group { height: 18px; margin-top: 1px; }
.timeline .group span { background: #585858; }
.transport { margin-left: 7px; }
.timeline .transport span { width: 18.900px; }
.field, .range span { background: #585858; height: 18px; line-height: 19px; letter-spacing: 0; }
.current { width: 74px; margin: 1px 0 0 441px; border-radius: 4px; text-align: center; padding-right: 2px; }
.range { display: flex; gap: 1px; margin: 1px 0 0 7px; border-radius: 4px; overflow: hidden; height: 18px; }
.range span { display: flex; justify-content: space-between; }
.range b { letter-spacing: -.5px; }
.range .stopwatch { width: 18px; }
.range .start { width: 87px; padding: 0 14px 0 15.500px; }
.range .end { width: 83px; padding: 0 13px 0 15px; }
.ruler { height: 23px; background: #2b2b2b; display: flex; color: #999; letter-spacing: 0; }
.frame { width: 26px; height: 19px; margin: 2px 0 0 44.500px; border-radius: 4px; background: #5680c2; border: 1px solid #6a90cc; color: #fff; text-align: center; line-height: 18px; }
.numbers { display: grid; grid-template-columns: repeat(25, 58.960px); margin-left: 10px; text-align: center; line-height: 25px; }
.tracks { height: 24px; }
.side { position: absolute; top: 40px; }
.side.left { left: 0; }
.side.right { right: 0; }

.status { height: 20px; background: #303030; display: flex; align-items: flex-start; padding: 3px 2px 0 12px; gap: 224px; color: #a8a8a8; }
.status span { margin: -1px 0 0 auto; letter-spacing: -.4px; }

.taskbar { height: 40px; background: linear-gradient(90deg, #22363e, #21353f 70%, #1e2f41 84%, #1c2945); display: flex; color: #fff; }
.start-btn { width: 48px; display: flex; align-items: center; padding-left: 15.500px; }
.search { width: 344px; background: #333; border: 1px solid #666; display: flex; align-items: center; gap: 10.500px; padding-left: 11px; font: 15px "Open Sans", sans-serif; letter-spacing: -.4px; color: #e0e0e0; }
.app { width: 40px; margin-right: 9px; flex: none; display: flex; align-items: center; justify-content: center; border-bottom: 2px solid transparent; padding-top: 2px; }
.app svg { width: 24px; height: 24px; overflow: visible; }
.search + .app { margin-left: 4px; margin-right: 8px; }
.search + .app + .app { margin-right: 11px; }
.run { border-color: #7fdfe4; }
.multi { border-image: linear-gradient(90deg, #7fdfe4 31px, #569da6 31px) 2; }
.badge { font: 600 9.500px "Open Sans", sans-serif; letter-spacing: -.2px; fill: #fff; text-anchor: middle; }
.rh { font: bold 24px/24px "Liberation Sans", sans-serif; letter-spacing: -1px; transform: scaleX(.72); background: linear-gradient(#f9bd25, #f09028 50%, #e6433b); -webkit-background-clip: text; color: transparent; filter: drop-shadow(0 0 1px #000); }
.current-app { width: 48px; margin-left: -4px; background: #4b5c67; }
.orange-ring { fill: #ee8418; }
.tray { margin-left: auto; width: 38px; display: flex; align-items: center; gap: 18px; }
```
